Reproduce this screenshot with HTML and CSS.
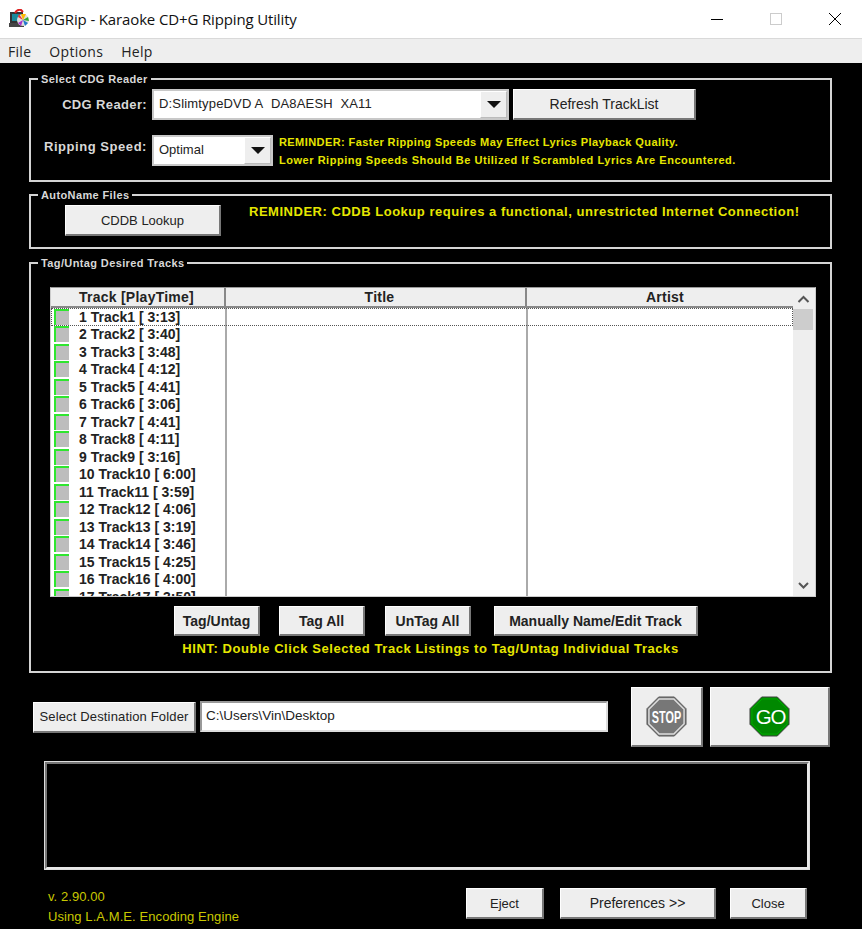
FILE: index.html
```html
<!DOCTYPE html>
<html lang="en">
<head>
<meta charset="utf-8">
<title>CDGRip - Karaoke CD+G Ripping Utility</title>
<link rel="stylesheet" href="styles.css">
</head>
<body>
<div class="window">
  <header class="titlebar">
    <svg class="appicon" width="20" height="20" viewBox="0 0 20 20">
      <rect x="1" y="3" width="13" height="11" fill="#333"/>
      <rect x="3" y="5" width="9" height="7" fill="#1a8a9a"/>
      <rect x="0" y="14" width="15" height="4" fill="#444"/>
      <path d="M6 4 Q8 0 12 1 L14 3" fill="none" stroke="#d22" stroke-width="2"/>
      <circle cx="14" cy="11" r="6" fill="#ddd"/>
      <path d="M14 11 L9 8 L10 5 Z" fill="#e33"/>
      <path d="M14 11 L12 5 L17 5 Z" fill="#fb0"/>
      <path d="M14 11 L19 8 L20 12 Z" fill="#3a3"/>
      <path d="M14 11 L19 14 L16 17 Z" fill="#27c"/>
      <path d="M14 11 L12 17 L9 14 Z" fill="#a3c"/>
    </svg>
    <span class="title">CDGRip - Karaoke CD+G Ripping Utility</span>
    <div class="winctl">
      <svg width="12" height="12" viewBox="0 0 12 12"><path d="M0 6.500H12" stroke="#000"/></svg>
      <svg width="12" height="12" viewBox="0 0 12 12"><rect x=".5" y=".5" width="11" height="11" fill="none" stroke="#ccc"/></svg>
      <svg width="12" height="12" viewBox="0 0 12 12"><path d="M0 0L12 12M12 0L0 12" stroke="#000"/></svg>
    </div>
  </header>
  <nav class="menubar"><span>File</span><span>Options</span><span>Help</span></nav>
  <main class="client">
    <section class="frame frame-reader">
      <h2 class="legend">Select CDG Reader</h2>
      <div class="row">
        <label class="field-label">CDG Reader:</label>
        <div class="combo combo-wide"><span class="combo-value">D:SlimtypeDVD A&nbsp; DA8AESH&nbsp; XA11</span><span class="combo-arrow"><i></i></span></div>
        <button class="btn btn-refresh">Refresh TrackList</button>
      </div>
      <div class="row row-speed">
        <label class="field-label">Ripping Speed:</label>
        <div class="combo combo-speed"><span class="combo-value">Optimal</span><span class="combo-arrow"><i></i></span></div>
        <p class="note note-speed"><span class="line-a">REMINDER: Faster Ripping Speeds May Effect Lyrics Playback Quality.</span><br><span class="line-b">Lower Ripping Speeds Should Be Utilized If Scrambled Lyrics Are Encountered.</span></p>
      </div>
    </section>

    <section class="frame frame-auto">
      <h2 class="legend">AutoName Files</h2>
      <button class="btn btn-cddb">CDDB Lookup</button>
      <p class="note note-cddb">REMINDER: CDDB Lookup requires a functional, unrestricted Internet Connection!</p>
    </section>

    <section class="frame frame-tracks">
      <h2 class="legend">Tag/Untag Desired Tracks</h2>
      <div class="list">
        <div class="list-main">
          <div class="list-head"><span class="col-track">Track [PlayTime]</span><span class="col-title">Title</span><span class="col-artist">Artist</span></div>
          <div class="list-rows">
            <div class="track focus"><i class="check"></i><span>1 Track1 [ 3:13]</span></div>
            <div class="track"><i class="check"></i><span>2 Track2 [ 3:40]</span></div>
            <div class="track"><i class="check"></i><span>3 Track3 [ 3:48]</span></div>
            <div class="track"><i class="check"></i><span>4 Track4 [ 4:12]</span></div>
            <div class="track"><i class="check"></i><span>5 Track5 [ 4:41]</span></div>
            <div class="track"><i class="check"></i><span>6 Track6 [ 3:06]</span></div>
            <div class="track"><i class="check"></i><span>7 Track7 [ 4:41]</span></div>
            <div class="track"><i class="check"></i><span>8 Track8 [ 4:11]</span></div>
            <div class="track"><i class="check"></i><span>9 Track9 [ 3:16]</span></div>
            <div class="track"><i class="check"></i><span>10 Track10 [ 6:00]</span></div>
            <div class="track"><i class="check"></i><span>11 Track11 [ 3:59]</span></div>
            <div class="track"><i class="check"></i><span>12 Track12 [ 4:06]</span></div>
            <div class="track"><i class="check"></i><span>13 Track13 [ 3:19]</span></div>
            <div class="track"><i class="check"></i><span>14 Track14 [ 3:46]</span></div>
            <div class="track"><i class="check"></i><span>15 Track15 [ 4:25]</span></div>
            <div class="track"><i class="check"></i><span>16 Track16 [ 4:00]</span></div>
            <div class="track"><i class="check"></i><span>17 Track17 [ 3:50]</span></div>
          </div>
        </div>
        <div class="scrollbar">
          <svg width="22" height="21" viewBox="0 0 22 21"><path d="M5.500 14L10.500 9L15.500 14" fill="none" stroke="#555" stroke-width="2"/></svg>
          <div class="thumb"></div>
          <svg class="scroll-down" width="22" height="22" viewBox="0 0 22 22"><path d="M6 9L10.500 13.500L15 9" fill="none" stroke="#555" stroke-width="2"/></svg>
        </div>
      </div>
      <div class="list-actions">
        <button class="btn btn-bold btn-tag">Tag/Untag</button>
        <button class="btn btn-bold btn-tag btn-tagall">Tag All</button>
        <button class="btn btn-bold btn-tag btn-untag">UnTag All</button>
        <button class="btn btn-bold btn-edit">Manually Name/Edit Track</button>
      </div>
      <p class="note hint">HINT: Double Click Selected Track Listings to Tag/Untag Individual Tracks</p>
    </section>

    <div class="dest">
      <button class="btn btn-dest">Select Destination Folder</button>
      <div class="path">C:\Users\Vin\Desktop</div>
      <button class="btn btn-stop" aria-label="Stop">
        <svg width="41" height="41" viewBox="0 0 42 42">
          <path d="M13 1H29L41 13V29L29 41H13L1 29V13Z" fill="#777" stroke="#555"/>
          <path d="M13.500 3H28.500L39 13.500V28.500L28.500 39H13.500L3 28.500V13.500Z" fill="none" stroke="#ddd" stroke-width="1.500"/>
          <text x="6" y="27.500" textLength="30" lengthAdjust="spacingAndGlyphs" class="sign-text sign-stop">STOP</text>
        </svg>
      </button>
      <button class="btn btn-go" aria-label="Go">
        <svg width="41" height="41" viewBox="0 0 42 42">
          <path d="M13 1H29L41 13V29L29 41H13L1 29V13Z" fill="#080" stroke="#444"/>
          <path d="M13.500 3H28.500L39 13.500V28.500L28.500 39H13.500L3 28.500V13.500Z" fill="none" stroke="#0a0" stroke-width="1"/>
          <text x="7 22" y="29" class="sign-text sign-go">GO</text>
        </svg>
      </button>
    </div>

    <div class="log"></div>

    <footer class="foot">
      <div class="version"><p>v. 2.90.00</p><p>Using L.A.M.E. Encoding Engine</p></div>
      <button class="btn btn-eject">Eject</button>
      <button class="btn btn-prefs">Preferences &gt;&gt;</button>
      <button class="btn btn-close">Close</button>
    </footer>
  </main>
</div>
</body>
</html>
```
FILE: styles.css
```css
* { box-sizing: border-box; }
html, body { margin: 0; padding: 0; height: 100%; }
body { font-family: "Liberation Sans", Arial, sans-serif; background: #000; overflow: hidden; }
p, h2 { margin: 0; }
.window { width: 862px; height: 929px; display: flex; flex-direction: column; }

.titlebar { height: 39px; background: #fff; border-bottom: 1px solid #d9d9d9; display: flex; align-items: center; padding-left: 9px; }
.appicon { flex: none; }
.title { margin-left: 5px; font: 15px "Open Sans", "Noto Sans", sans-serif; letter-spacing: -.14px; color: #111; white-space: nowrap; }
.winctl { margin-left: auto; display: flex; gap: 47px; padding-right: 21px; }

.menubar { height: 24px; background: #eee; display: flex; align-items: center; padding-left: 8px; gap: 18px; font: 14px "Open Sans", "Noto Sans", sans-serif; letter-spacing: .3px; color: #222; }

.client { flex: 1; padding: 15px 0 0 29px; background: #000; }

.frame { position: relative; width: 803px; border: 2px solid #d4d4d4; }
.legend { position: absolute; left: 7px; top: -8px; padding: 0 3px; background: #000; color: #d8d8d8; font-size: 11px; font-weight: 700; letter-spacing: .38px; line-height: 14px; white-space: nowrap; }

.frame-reader { height: 104px; padding-top: 8px; }
.row { display: flex; align-items: center; height: 32px; }
.row-speed { margin-top: 14px; }
.row-speed .field-label { margin-bottom: 8px; letter-spacing: .55px; }
.field-label { width: 116px; text-align: right; color: #d8d8d8; font-size: 13px; font-weight: 700; letter-spacing: .36px; margin-right: 5px; flex: none; }
.combo { height: 31px; display: flex; background: #fff; border: 2px solid #c8c8c8; flex: none; align-items: stretch; }
.combo-wide { width: 357px; margin-right: 4px; }
.combo-speed { width: 121px; }
.combo-value { flex: 1; font-size: 13px; line-height: 26px; padding-left: 5px; color: #222; white-space: nowrap; }
.combo-wide .combo-value { letter-spacing: .17px; }
.combo-arrow { width: 27px; background: #eee; border: 1px solid #bbb; border-top-color: #fff; border-left-color: #fff; display: flex; align-items: center; justify-content: center; }
.combo-arrow i { width: 0; height: 0; border-left: 7px solid transparent; border-right: 7px solid transparent; border-top: 7px solid #111; }

.btn { display: block; flex: none; padding: 0; background: #eee; color: #222; font-family: inherit; font-size: 13px; border: 1px solid #fff; border-right: 2px solid #777; border-bottom: 2px solid #777; height: 31px; }
.btn-bold { font-weight: 700; font-size: 14px; }
.btn-refresh { width: 183px; font-size: 14px; }
.note { color: #e6e600; font-weight: 700; }
.note-speed { margin: 2px 0 0 6px; font-size: 11px; line-height: 18px; white-space: nowrap; }
.line-a { letter-spacing: .42px; }
.line-b { letter-spacing: .53px; }

.frame-auto { height: 55px; margin-top: 12px; padding: 9px 0 0 34px; display: flex; align-items: flex-start; }
.btn-cddb { width: 156px; }
.note-cddb { margin: -1px 0 0 28px; font-size: 13px; letter-spacing: .52px; line-height: 16px; white-space: nowrap; }

.frame-tracks { height: 411px; margin-top: 13px; padding: 23px 0 0 19px; }
.list { display: flex; width: 766px; height: 310px; background: #fff; border: 1px solid #999; border-right-color: #ccc; border-bottom-color: #ccc; border-left-color: #ccc; }
.list-main { flex: 1; min-width: 0; position: relative; overflow: hidden; }
.list-head { display: flex; height: 20px; background: #eee; border-bottom: 2px solid #888; font-size: 14px; font-weight: 700; letter-spacing: .25px; color: #222; line-height: 18px; text-align: center; }
.col-track { width: 175px; border-right: 2px solid #888; padding-right: 2px; }
.col-title { width: 301px; border-right: 2px solid #888; padding-left: 8px; }
.col-artist { flex: 1; padding-left: 10px; }
.list-rows { position: relative; height: 288px; overflow: hidden; background: linear-gradient(#aaa,#aaa) 174px 0/2px 100% no-repeat, linear-gradient(#aaa,#aaa) 475px 0/2px 100% no-repeat, #fff; }
.track { display: flex; align-items: center; height: 17.500px; padding-left: 3px; font-size: 14px; font-weight: 700; color: #222; white-space: nowrap; }
.track.focus { outline: 1px dotted #555; outline-offset: -1px; }
.check { display: block; flex: none; width: 15px; height: 16px; background: #bdbdbd; border-top: 2px solid #2ee62e; border-left: 2px solid #2ee62e; }
.track span { margin-left: 10px; }
.scrollbar { position: relative; width: 22px; background: #eee; }
.scrollbar svg { display: block; }
.thumb { width: 20px; height: 21px; background: #cdcdcd; }
.scroll-down { position: absolute; bottom: 0; left: 0; }

.list-actions { display: flex; margin: 9px 0 0 124px; }
.btn-tag { width: 86px; height: 30px; }
.btn-tagall { margin-left: 19px; }
.btn-untag { margin-left: 20px; }
.btn-edit { width: 204px; height: 30px; margin-left: 23px; }
.hint { margin-top: 5px; margin-left: -19px; text-align: center; font-size: 13px; letter-spacing: .57px; line-height: 16px; }

.dest { display: flex; align-items: center; margin: 14px 0 0 4px; height: 60px; }
.btn-dest { width: 163px; letter-spacing: .15px; }
.path { width: 408px; height: 31px; margin: -2px 23px 0 4px; background: #fff; border: 2px solid #999; border-right-color: #ddd; border-bottom-color: #ddd; font-size: 13.500px; line-height: 25px; padding-left: 4px; color: #222; }
.btn-stop, .btn-go { height: 60px; display: flex; align-items: center; justify-content: center; }
.btn-stop { width: 72px; }
.btn-go { width: 120px; margin-left: 7px; }
.sign-text { font-family: "Liberation Sans", Arial, sans-serif; font-weight: 700; fill: #fff; }
.sign-stop { font-size: 17px; }
.sign-go { font-size: 21px; font-weight: 400; }

.log { width: 766px; height: 109px; margin: 14px 0 0 15px; background: #000; border: 3px solid #e8e8e8; border-top-color: #777; border-left-color: #777; outline: 1px solid #ddd; outline-offset: -1px; }

.foot { display: flex; margin: 18px 0 0 19px; }
.version { width: 418px; color: #c8c800; font-size: 13px; letter-spacing: .08px; line-height: 20px; margin-top: -1px; }
.btn-eject { width: 78px; }
.btn-prefs { width: 156px; margin-left: 16px; font-size: 14px; }
.btn-close { width: 77px; margin-left: 14px; }
```
